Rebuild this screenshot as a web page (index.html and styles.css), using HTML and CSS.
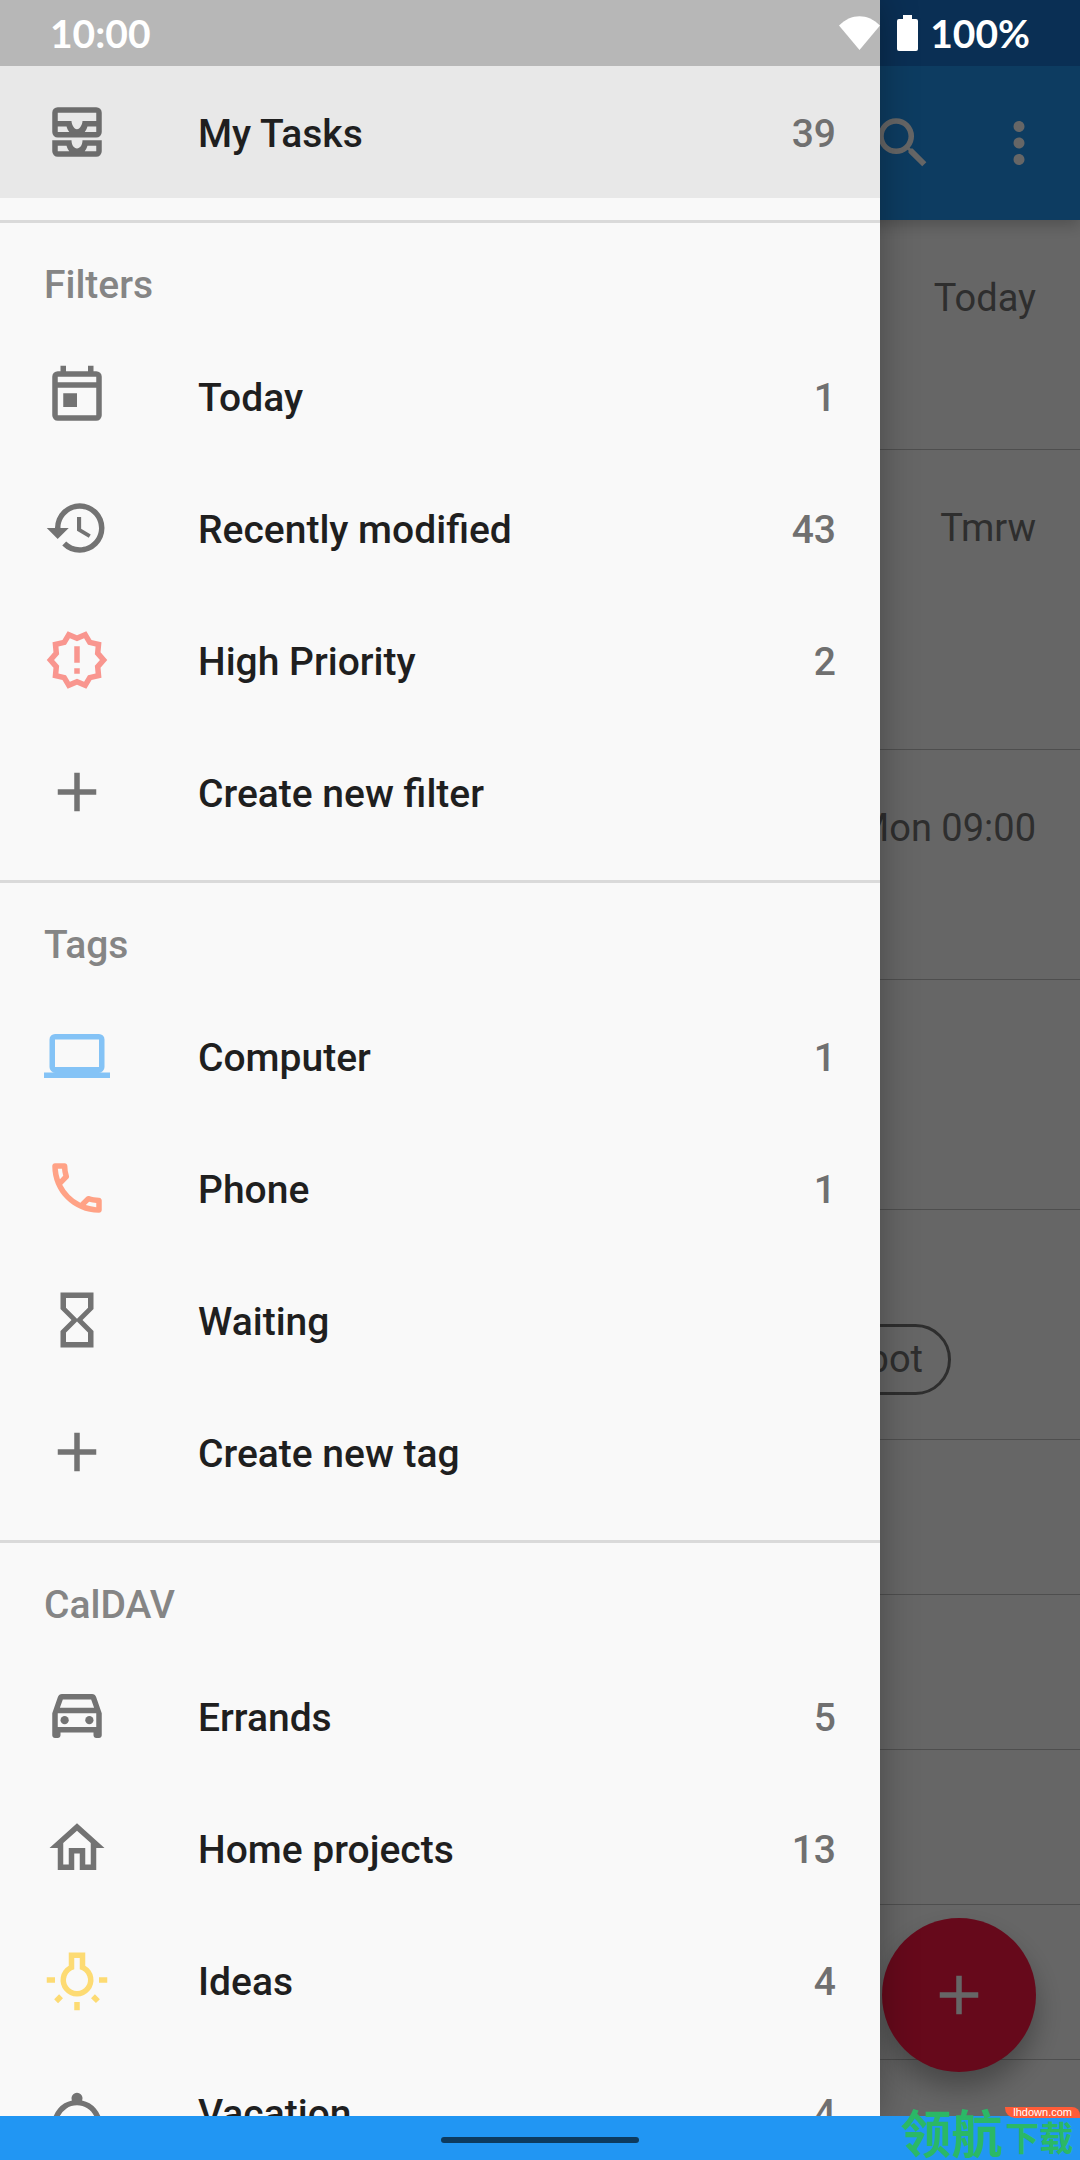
FILE: index.html
```html
<!DOCTYPE html>
<html lang="en">
<head>
<meta charset="utf-8">
<meta name="viewport" content="width=device-width, initial-scale=1">
<title>Tasks</title>
<link rel="stylesheet" href="styles.css">
</head>
<body>
<div class="screen">
  <div class="app">
    <header class="app-bar">
      <button class="bar-button" type="button" aria-label="Search">
        <svg class="icon" viewBox="0 0 24 24"><path d="M15.5 14h-.79l-.28-.27A6.47 6.47 0 0 0 16 9.5 6.5 6.5 0 1 0 9.5 16c1.61 0 3.09-.59 4.23-1.57l.27.28v.79l5 4.99L20.49 19l-4.99-5zm-6 0C7.01 14 5 11.99 5 9.5S7.01 5 9.5 5 14 7.01 14 9.5 11.99 14 9.5 14z"/></svg>
      </button>
      <button class="bar-button" type="button" aria-label="More options">
        <svg class="icon" viewBox="0 0 24 24"><path d="M12 8c1.1 0 2-.9 2-2s-.9-2-2-2-2 .9-2 2 .9 2 2 2zm0 2c-1.100 0-2 .9-2 2s.9 2 2 2 2-.9 2-2-.9-2-2-2zm0 6c-1.100 0-2 .9-2 2s.9 2 2 2 2-.9 2-2-.9-2-2-2z"/></svg>
      </button>
    </header>
    <ul class="tasks">
      <li class="task task-medium"><time class="due">Today</time></li>
      <li class="task task-tall"><time class="due">Tmrw</time></li>
      <li class="task task-medium"><time class="due">Mon 09:00</time></li>
      <li class="task task-medium"></li>
      <li class="task task-medium task-tagged"><span class="chip">Robot</span></li>
      <li class="task"></li>
      <li class="task"></li>
      <li class="task"></li>
      <li class="task"></li>
      <li class="task"></li>
    </ul>
    <button class="fab" type="button" aria-label="New task">
      <svg class="icon" viewBox="0 0 24 24"><path d="M19 13h-6v6h-2v-6H5v-2h6V5h2v6h6v2z"/></svg>
    </button>
    <div class="scrim"></div>
  </div>

  <nav class="drawer">
    <section class="group">
      <a class="item item-selected" href="#my-tasks">
        <svg class="icon" viewBox="0 0 24 24"><path fill-rule="evenodd" d="M5 3h14a2 2 0 0 1 2 2v7a2 2 0 0 1-2 2H5a2 2 0 0 1-2-2V5a2 2 0 0 1 2-2zm0 2v3h5c0 1.100.9 3 2 3s2-1.900 2-3h5V5zm0 5v2h4.200c-.45-.55-.8-1.200-1-2zm10.800 0c-.2.800-.55 1.450-1 2H19v-2zM3 15h7c0 1.700.9 3 2 3s2-1.300 2-3h7v4a2 2 0 0 1-2 2H5a2 2 0 0 1-2-2zm2 2v2h4.200c-.45-.55-.8-1.200-1-2zm10.800 0c-.2.800-.55 1.450-1 2H19v-2z"/></svg>
        <span class="label">My Tasks</span><span class="count">39</span>
      </a>
    </section>

    <section class="group">
      <h2 class="heading">Filters</h2>
      <a class="item" href="#today">
        <svg class="icon" viewBox="0 0 24 24"><path fill-rule="evenodd" d="M19 3h-1V1h-2v2H8V1H6v2H5a2 2 0 0 0-2 2v14a2 2 0 0 0 2 2h14a2 2 0 0 0 2-2V5a2 2 0 0 0-2-2zm0 16H5V9h14zm0-12H5V5h14zM7 11h5v5H7z"/></svg>
        <span class="label">Today</span><span class="count">1</span>
      </a>
      <a class="item" href="#recent">
        <svg class="icon" viewBox="0 0 24 24"><path d="M13 3a9 9 0 0 0-9 9H1l3.890 3.890.07.14L9 12H6c0-3.870 3.130-7 7-7s7 3.130 7 7-3.130 7-7 7c-1.930 0-3.680-.79-4.940-2.060l-1.420 1.420A8.954 8.954 0 0 0 13 21a9 9 0 0 0 0-18zm-1 5v5l4.280 2.540.72-1.210-3.500-2.080V8H12z"/></svg>
        <span class="label">Recently modified</span><span class="count">43</span>
      </a>
      <a class="item" href="#priority">
        <svg class="icon icon-red" viewBox="0 0 24 24"><path fill-rule="evenodd" d="M23 12l-2.440-2.780.34-3.680-3.610-.82-1.890-3.180L12 3 8.600 1.540 6.710 4.720l-3.610.81.34 3.680L1 12l2.440 2.780-.34 3.690 3.610.82 1.890 3.180L12 21l3.400 1.460 1.890-3.180 3.610-.82-.34-3.680L23 12zm-4.510 2.110.26 2.790-2.740.62-1.430 2.410L12 18.820l-2.580 1.110-1.430-2.410-2.740-.62.260-2.800L3.660 12l1.850-2.120-.26-2.780 2.740-.61 1.430-2.410L12 5.180l2.580-1.110 1.430 2.410 2.740.62-.26 2.790L20.340 12l-1.850 2.110zM11 15h2v2h-2zm0-8h2v6h-2z"/></svg>
        <span class="label">High Priority</span><span class="count">2</span>
      </a>
      <a class="item" href="#new-filter">
        <svg class="icon" viewBox="0 0 24 24"><path d="M19 13h-6v6h-2v-6H5v-2h6V5h2v6h6v2z"/></svg>
        <span class="label">Create new filter</span>
      </a>
    </section>

    <section class="group">
      <h2 class="heading">Tags</h2>
      <a class="item" href="#computer">
        <svg class="icon icon-blue" viewBox="0 0 24 24"><path d="M20 18a2 2 0 0 0 2-2V6a2 2 0 0 0-2-2H4a2 2 0 0 0-2 2v10a2 2 0 0 0 2 2H0v2h24v-2h-4zM4 6h16v10H4V6z"/></svg>
        <span class="label">Computer</span><span class="count">1</span>
      </a>
      <a class="item" href="#phone">
        <svg class="icon icon-orange" viewBox="0 0 24 24"><path d="M6.540 5c.06.89.21 1.760.45 2.590l-1.200 1.200c-.41-1.200-.67-2.470-.76-3.790h1.510m9.860 12.020c.85.24 1.720.39 2.600.45v1.490c-1.320-.09-2.590-.35-3.800-.75l1.200-1.190M7.500 3H4c-.55 0-1 .45-1 1 0 9.390 7.610 17 17 17 .55 0 1-.45 1-1v-3.490c0-.55-.45-1-1-1-1.240 0-2.450-.2-3.570-.57a.84.84 0 0 0-.31-.05c-.26 0-.51.1-.71.29l-2.200 2.200a15.149 15.149 0 0 1-6.590-6.590l2.200-2.200c.28-.28.36-.67.25-1.020A11.360 11.360 0 0 1 8.500 4c0-.55-.45-1-1-1z"/></svg>
        <span class="label">Phone</span><span class="count">1</span>
      </a>
      <a class="item" href="#waiting">
        <svg class="icon" viewBox="0 0 24 24"><path d="M6 2v6h.01L6 8.010 10 12l-4 4 .01.010H6V22h12v-5.990h-.01L18 16l-4-4 4-3.990-.01-.01H18V2H6zm10 14.500V20H8v-3.500l4-4 4 4zm-4-5-4-4V4h8v3.500l-4 4z"/></svg>
        <span class="label">Waiting</span>
      </a>
      <a class="item" href="#new-tag">
        <svg class="icon" viewBox="0 0 24 24"><path d="M19 13h-6v6h-2v-6H5v-2h6V5h2v6h6v2z"/></svg>
        <span class="label">Create new tag</span>
      </a>
    </section>

    <section class="group">
      <h2 class="heading">CalDAV</h2>
      <a class="item" href="#errands">
        <svg class="icon" viewBox="0 0 24 24"><path fill-rule="evenodd" d="M18.920 5.010C18.720 4.420 18.160 4 17.500 4h-11c-.66 0-1.210.42-1.420 1.010L3 11v8c0 .55.45 1 1 1h1c.55 0 1-.45 1-1v-1h12v1c0 .55.45 1 1 1h1c.55 0 1-.45 1-1v-8l-2.080-5.990zM6.850 6h10.290l1.080 3H5.770l1.080-3zM19 16H5v-5h14v5z"/><circle cx="7.500" cy="13.500" r="1.500"/><circle cx="16.500" cy="13.500" r="1.500"/></svg>
        <span class="label">Errands</span><span class="count">5</span>
      </a>
      <a class="item" href="#home">
        <svg class="icon" viewBox="0 0 24 24"><path d="M12 5.690l5 4.500V18h-2v-6H9v6H7v-7.810l5-4.500M12 3L2 12h3v8h6v-6h2v6h6v-8h3L12 3z"/></svg>
        <span class="label">Home projects</span><span class="count">13</span>
      </a>
      <a class="item" href="#ideas">
        <svg class="icon icon-yellow" viewBox="0 0 24 24"><path fill-rule="evenodd" d="M11 20h2v3h-2zM1 11h3v2H1zm19 0h3v2h-3zM3.700 19l1.790-1.800 1.410 1.410-1.790 1.800zM17.100 18.610l1.410-1.410 1.800 1.790-1.410 1.410zM9 2h6v4.810A6 6 0 1 1 9 6.810zM11 4v4.130A4 4 0 1 0 13 8.130V4z"/></svg>
        <span class="label">Ideas</span><span class="count">4</span>
      </a>
      <a class="item" href="#vacation">
        <svg class="icon" viewBox="0 0 24 24"><path fill-rule="evenodd" d="M2 17h20v2H2zM13.840 7.790a2 2 0 1 0-3.680 0A9.006 9.006 0 0 0 3 16h18a9.006 9.006 0 0 0-7.160-8.210zM12 9.580c2.950 0 5.470 1.830 6.500 4.410h-13A7.002 7.002 0 0 1 12 9.580z"/></svg>
        <span class="label">Vacation</span><span class="count">4</span>
      </a>
    </section>
  </nav>

  <div class="status-bar">
    <span class="clock">10:00</span>
    <svg class="wifi" viewBox="0 0 41 34"><path d="M0 9.500C12-3 29-3 41 9.500L20.500 34z"/></svg>
    <svg class="battery" viewBox="0 0 21 36"><path d="M6 0h9v4h4a2 2 0 0 1 2 2v28a2 2 0 0 1-2 2H2a2 2 0 0 1-2-2V6a2 2 0 0 1 2-2h4z"/></svg>
    <span class="level">100%</span>
  </div>

  <footer class="nav-bar"><span class="handle"></span></footer>

  <div class="watermark">
    <span class="mark-large">领航</span>
    <span class="mark-side"><span class="mark-site">lhdown.com</span><span class="mark-small">下载</span></span>
  </div>
</div>
</body>
</html>
```
FILE: styles.css
```css
* { box-sizing: border-box; }

body {
  margin: 0;
  font-family: Roboto, "Liberation Sans", sans-serif;
  font-size: 39px;
  line-height: 44px;
}

.screen {
  position: relative;
  display: flex;
  flex-direction: column;
  height: 100vh;
  overflow: hidden;
}

.icon {
  display: block;
  flex: none;
  width: 66px;
  height: 66px;
  fill: #737373;
}
.icon-red { fill: #f9968f; }
.icon-blue { fill: #84c3f6; }
.icon-orange { fill: #ffa286; }
.icon-yellow { fill: #fddb73; }

/* Task list behind the drawer */
.app {
  position: relative;
  flex: 1;
  min-height: 0;
  overflow: hidden;
  background: #fff;
}

.app-bar {
  position: relative;
  display: flex;
  justify-content: flex-end;
  align-items: center;
  gap: 50px;
  height: 220px;
  padding: 66px 28px 0 0;
  background: linear-gradient(#1976d2 66px, #2196f3 66px);
  box-shadow: 0 6px 14px rgba(0, 0, 0, .2);
}

.bar-button {
  padding: 0;
  border: 0;
  background: none;
}
.bar-button .icon, .fab .icon { fill: #fff; }

.tasks {
  margin: 0;
  padding: 0;
  list-style: none;
}
.task {
  display: flex;
  justify-content: flex-end;
  align-items: flex-start;
  height: 155px;
  padding: 56px 44px 0;
  border-bottom: 1px solid #c4c4c4;
  color: #737373;
  font-size: 38px;
}
.task-medium { height: 230px; }
.task-tall { height: 300px; }
.task-tagged { padding: 114px 129px 0; }

.chip {
  padding: 10px 25px 11px;
  border: 3px solid #737373;
  border-radius: 36px;
}

.fab {
  position: absolute;
  right: 44px;
  bottom: 44px;
  display: grid;
  place-items: center;
  width: 154px;
  height: 154px;
  padding: 0;
  border: 0;
  border-radius: 50%;
  background: #ff1744;
  box-shadow: 0 16px 28px rgba(0, 0, 0, .3);
}

.scrim {
  position: absolute;
  inset: 0;
  background: rgba(0, 0, 0, .6);
}

/* Navigation drawer */
.drawer {
  position: absolute;
  top: 0;
  bottom: 44px;
  left: 0;
  width: calc(100% - 200px);
  padding-top: 66px;
  overflow: hidden;
  background: #f9f9f9;
  box-shadow: 0 0 36px rgba(0, 0, 0, .3);
}

.group { padding-bottom: 22px; }
.group + .group { border-top: 3px solid #dadada; }

.heading {
  margin: 0;
  padding: 40px 44px 23px;
  color: #858585;
  font-size: 39px;
  font-weight: 500;
  line-height: 44px;
}

.item {
  display: flex;
  align-items: center;
  height: 132px;
  padding: 0 44px;
  color: #1f1f1f;
  font-weight: 500;
  text-decoration: none;
}
.item-selected { background: #e8e8e8; }
.item-selected .icon { fill: #6c6c6c; }
.label, .count { padding-top: 4px; }
.label {
  flex: 1;
  margin-left: 88px;
}
.count { color: #707070; }

/* System bars */
.status-bar {
  position: absolute;
  inset: 0 0 auto;
  display: flex;
  align-items: center;
  height: 66px;
  padding: 0 50px;
  background: linear-gradient(#b7b7b7, #b7b7b7) no-repeat left / calc(100% - 200px) 100%;
  color: #fff;
  font-family: Lato, Roboto, sans-serif;
  font-weight: 700;
}
.clock { flex: 1; }
.wifi {
  width: 41px;
  height: 34px;
  margin-right: 17px;
  fill: #fff;
}
.battery {
  width: 21px;
  height: 36px;
  margin-right: 12px;
  fill: #fff;
}

.nav-bar {
  position: relative;
  display: flex;
  justify-content: center;
  align-items: center;
  height: 44px;
  padding-top: 4px;
  background: #2196f3;
}
.handle {
  width: 198px;
  height: 6px;
  border-radius: 3px;
  background: #0d3b5f;
}

/* Site mark over the corner */
.watermark {
  position: absolute;
  right: 0;
  bottom: 4px;
  display: flex;
  align-items: flex-end;
  gap: 3px;
  color: #2bb866;
  font-family: "Noto Sans CJK SC", sans-serif;
  font-weight: 700;
  white-space: nowrap;
}
.mark-large {
  font-size: 51px;
  line-height: 50px;
}
.mark-side {
  display: flex;
  flex-direction: column;
}
.mark-site {
  padding: 0 8px;
  border-radius: 0 8px 0 10px;
  background: #ff5c38;
  color: #fff;
  font-family: "Liberation Sans", sans-serif;
  font-size: 11px;
  font-weight: 400;
  line-height: 11px;
}
.mark-small {
  font-size: 34px;
  line-height: 38px;
}
```
